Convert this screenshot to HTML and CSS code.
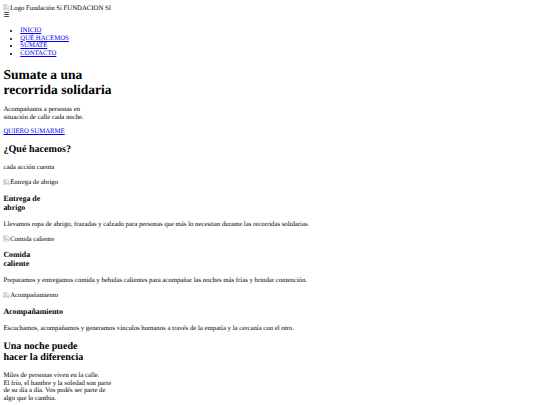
FILE: index.html
```html
<!DOCTYPE html>
<html lang="es">
<head>
<meta charset="utf-8">
<title>Fundación Sí</title>
<link rel="stylesheet" href="styles.css">
</head>
<body class="page">
<header class="site-header">
  <div class="brand"><span class="broken-img"><svg class="broken-icon" viewBox="0 0 16 16"><path d="M1.5 1.5h9l4 4v9h-13z" fill="#f4f4f4" stroke="#9a9a9a"/><path d="M3 12l3-4 2 3 2-2 3 3" fill="none" stroke="#4a8a3a"/><circle cx="5" cy="5" r="1.3" fill="#4a7fc0"/></svg>Logo Fundación Sí</span> FUNDACION SI</div>
  <div class="menu-toggle"><span class="burger">☰</span></div>
  <ul class="nav">
    <li><a class="link" href="#">INICIO</a></li>
    <li><a class="link" href="#">QUÉ HACEMOS</a></li>
    <li><a class="link" href="#">SUMATE</a></li>
    <li><a class="link" href="#">CONTACTO</a></li>
  </ul>
</header>
<main>
  <section class="hero">
    <h1 class="h1">Sumate a una<br>recorrida solidaria</h1>
    <p class="p">Acompañanos a personas en<br>situación de calle cada noche.</p>
    <a class="link" href="#">QUIERO SUMARME</a>
  </section>
  <section class="what">
    <h2 class="h2">¿Qué hacemos?</h2>
    <p class="p">cada acción cuenta</p>
    <div class="card">
      <p class="p"><span class="broken-img"><svg class="broken-icon" viewBox="0 0 16 16"><path d="M1.5 1.5h9l4 4v9h-13z" fill="#f4f4f4" stroke="#9a9a9a"/><path d="M3 12l3-4 2 3 2-2 3 3" fill="none" stroke="#4a8a3a"/><circle cx="5" cy="5" r="1.3" fill="#4a7fc0"/></svg>Entrega de abrigo</span></p>
      <h3 class="h3">Entrega de<br>abrigo</h3>
      <p class="p">Llevamos ropa de abrigo, frazadas y calzado para personas que más lo necesitan durante las recorridas solidarias.</p>
    </div>
    <div class="card">
      <p class="p"><span class="broken-img"><svg class="broken-icon" viewBox="0 0 16 16"><path d="M1.5 1.5h9l4 4v9h-13z" fill="#f4f4f4" stroke="#9a9a9a"/><path d="M3 12l3-4 2 3 2-2 3 3" fill="none" stroke="#4a8a3a"/><circle cx="5" cy="5" r="1.3" fill="#4a7fc0"/></svg>Comida caliente</span></p>
      <h3 class="h3">Comida<br>caliente</h3>
      <p class="p">Preparamos y entregamos comida y bebidas calientes para acompañar las noches más frías y brindar contención.</p>
    </div>
    <div class="card">
      <p class="p"><span class="broken-img"><svg class="broken-icon" viewBox="0 0 16 16"><path d="M1.5 1.5h9l4 4v9h-13z" fill="#f4f4f4" stroke="#9a9a9a"/><path d="M3 12l3-4 2 3 2-2 3 3" fill="none" stroke="#4a8a3a"/><circle cx="5" cy="5" r="1.3" fill="#4a7fc0"/></svg>Acompañamiento</span></p>
      <h3 class="h3">Acompañamiento</h3>
      <p class="p">Escuchamos, acompañamos y generamos vínculos humanos a través de la empatía y la cercanía con el otro.</p>
    </div>
  </section>
  <section class="night">
    <h2 class="h2">Una noche puede<br>hacer la diferencia</h2>
    <p class="p">Miles de personas viven en la calle.<br>El frío, el hambre y la soledad son parte<br>de su día a día. Vos podés ser parte de<br>algo que lo cambia.</p>
  </section>
</main>
</body>
</html>
```
FILE: styles.css
```css
html { font-size: 6.75px; }
.page {
  margin: 4px 3.4px 3.4px;
  font-family: "Liberation Serif", "Times New Roman", serif;
  font-size: 6.75px;
  line-height: 1.135;
  color: #000;
  background: #fff;
  text-rendering: geometricPrecision;
}
.site-header { display: block; }
.brand { line-height: 1.135; }
.menu-toggle { line-height: 1.135; height: 7.7px; }
.burger {
  font-family: "DejaVu Sans", sans-serif;
  font-size: 6.75px;
  line-height: 1;
  color: #222;
}
.nav {
  margin: 1em 0;
  padding-left: 16.9px;
  list-style: disc;
}
.link { color: #0000ee; text-decoration: underline; }
.h1 { font-size: 2em; margin: 0.67em 0; font-weight: bold; }
.h2 { font-size: 1.5em; margin: 0.83em 0; font-weight: bold; }
.h3 { font-size: 1.17em; margin: 1em 0; font-weight: bold; }
.p { margin: 1em 0; }
.broken-img { display: inline; }
.broken-icon {
  width: 6.75px;
  height: 6.75px;
  vertical-align: -1px;
}
```
